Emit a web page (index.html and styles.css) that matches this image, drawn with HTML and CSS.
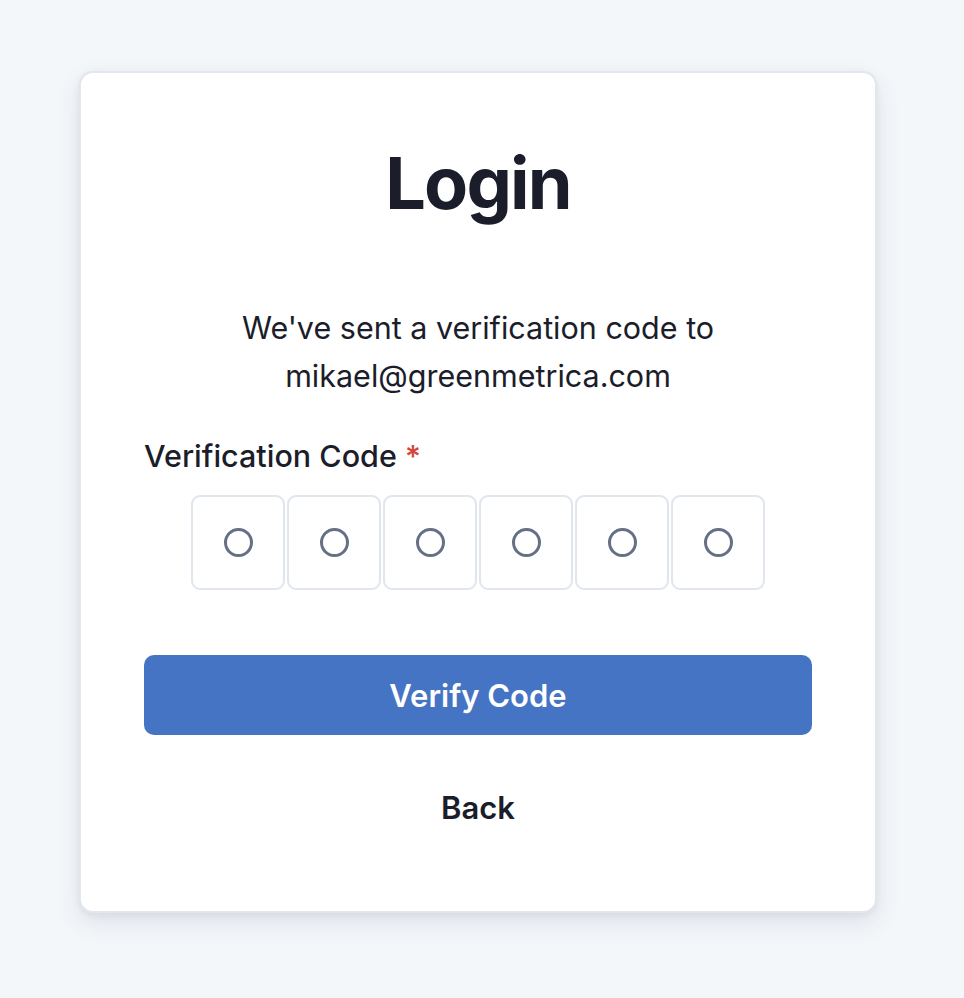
FILE: index.html
```html
<!DOCTYPE html>
<html lang="en">
<head>
<meta charset="utf-8">
<title>Login</title>
<link rel="stylesheet" href="styles.css">
</head>
<body>
<main class="page">
  <section class="card">
    <h1 class="title">Login</h1>
    <p class="subtitle">We've sent a verification code to<br>mikael@greenmetrica.com</p>
    <div class="field">
      <label class="label">Verification Code <span class="req">*</span></label>
      <div class="code-row">
        <div class="code-box"><span class="dot"></span></div>
        <div class="code-box"><span class="dot"></span></div>
        <div class="code-box"><span class="dot"></span></div>
        <div class="code-box"><span class="dot"></span></div>
        <div class="code-box"><span class="dot"></span></div>
        <div class="code-box"><span class="dot"></span></div>
      </div>
    </div>
    <button class="btn-primary" type="button">Verify Code</button>
    <button class="btn-link" type="button">Back</button>
  </section>
</main>
</body>
</html>
```

FILE: styles.css
```css
* { box-sizing: border-box; }
html, body { margin: 0; padding: 0; }
body {
  background: #f4f7fa;
  font-family: Inter, "Noto Sans", sans-serif;
  color: #1b1d2a;
  width: 964px;
  height: 998px;
}
.page {
  padding: 71px 87px 0 79px;
}
.card {
  width: 798px;
  height: 842px;
  background: #ffffff;
  border: 2px solid #e2e6ef;
  border-radius: 14px;
  box-shadow: 0 10px 24px rgba(30, 41, 59, 0.10), 0 2px 6px rgba(30, 41, 59, 0.06);
  padding: 0 63px;
  display: flex;
  flex-direction: column;
  align-items: stretch;
}
.title {
  margin: 66px 0 0;
  font-size: 72px;
  font-weight: 700;
  line-height: 88px;
  text-align: center;
  letter-spacing: -1.8px;
}
.subtitle {
  margin: 77px 0 0;
  font-size: 30.5px;
  line-height: 48px;
  text-align: center;
  font-weight: 400;
}
.field {
  margin-top: 36px;
  display: flex;
  flex-direction: column;
}
.label {
  font-size: 30.5px;
  line-height: 40px;
  font-weight: 500;
}
.req { color: #d64537; }
.code-row {
  margin-top: 19px;
  display: flex;
  justify-content: center;
  gap: 2px;
}
.code-box {
  width: 94px;
  height: 95px;
  border: 2px solid #e1e5ee;
  border-radius: 9px;
  display: flex;
  align-items: center;
  justify-content: center;
}
.dot {
  width: 29px;
  height: 29px;
  border: 3px solid #657086;
  border-radius: 50%;
}
.btn-primary {
  margin-top: 65px;
  height: 80px;
  border: 0;
  border-radius: 10px;
  background: #4574c4;
  color: #ffffff;
  font-family: inherit;
  font-size: 31px;
  font-weight: 600;
}
.btn-link {
  margin-top: 46px;
  align-self: center;
  background: none;
  border: 0;
  padding: 0;
  font-family: inherit;
  font-size: 31px;
  font-weight: 600;
  line-height: 54px;
  color: #1b1d2a;
}
```
